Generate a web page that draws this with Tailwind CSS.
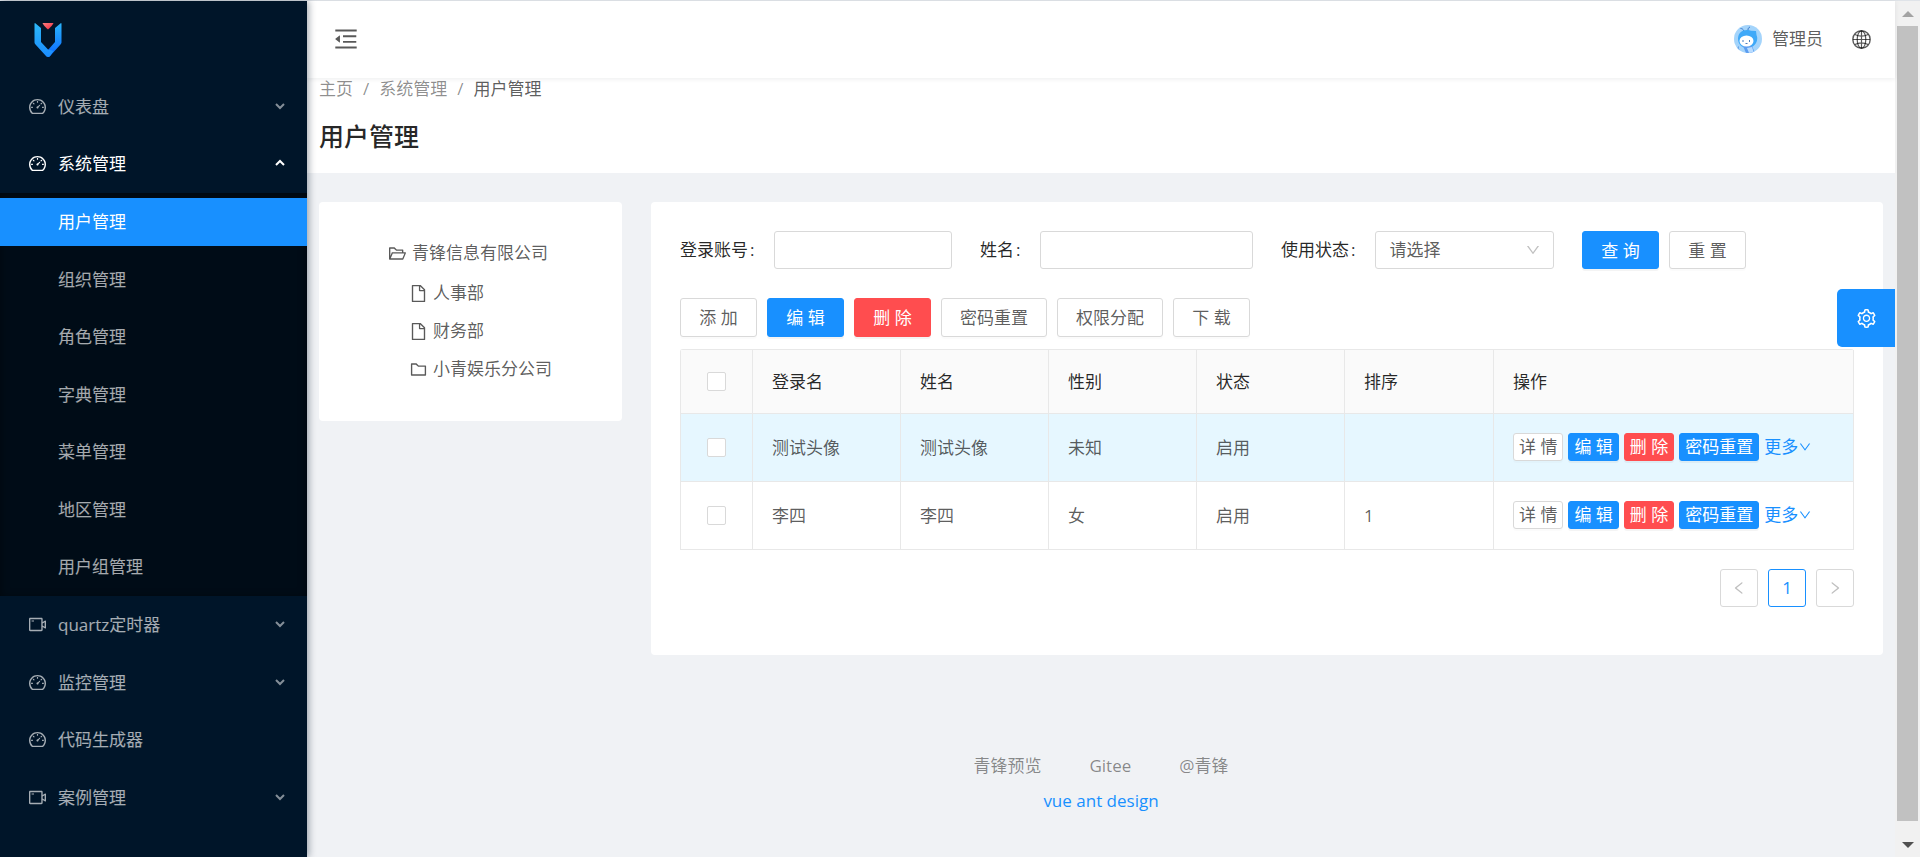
<!DOCTYPE html>
<html lang="zh-CN">
<head>
<meta charset="utf-8">
<title>用户管理</title>
<meta name="viewport" content="width=device-width, initial-scale=1">
<script src="https://cdn.jsdelivr.net/npm/@tailwindcss/browser@4"></script>
</head>
<body class="bg-[#f0f2f5] font-['Open_Sans','Noto_Sans_CJK_SC',sans-serif] text-[17px] leading-[25px] text-black/65">

<!-- Shared icon symbols -->
<svg class="hidden" aria-hidden="true">
  <symbol id="i-dashboard" viewBox="64 64 896 896"><path d="M924.8 385.6a446.7 446.7 0 0 0-96-142.4 446.7 446.7 0 0 0-142.4-96C631.1 123.8 572.5 112 512 112s-119.1 11.8-174.4 35.2a446.7 446.7 0 0 0-142.4 96 446.7 446.7 0 0 0-96 142.4C75.8 440.9 64 499.5 64 560c0 132.7 58.3 257.7 159.9 343.1l1.7 1.4c5.8 4.8 13.1 7.5 20.6 7.5h531.7c7.5 0 14.8-2.7 20.6-7.5l1.7-1.4C901.7 817.7 960 692.7 960 560c0-60.5-11.9-119.1-35.2-174.4zM761.4 836H262.6A371.12 371.12 0 0 1 140 560c0-99.4 38.7-192.8 109-263 70.3-70.3 163.7-109 263-109 99.4 0 192.8 38.7 263 109 70.3 70.3 109 163.7 109 263 0 105.6-44.5 205.5-122.6 276zM623.5 421.5a8.03 8.03 0 0 0-11.3 0L527.7 506c-18.7-5-39.4-.2-54.1 14.5a55.95 55.95 0 0 0 0 79.2 55.95 55.95 0 0 0 79.2 0 55.87 55.87 0 0 0 14.5-54.1l84.5-84.5c3.1-3.1 3.1-8.2 0-11.3l-28.3-28.3zM490 320h44c4.4 0 8-3.6 8-8v-80c0-4.4-3.6-8-8-8h-44c-4.4 0-8 3.6-8 8v80c0 4.4 3.6 8 8 8zm260 218v44c0 4.4 3.6 8 8 8h80c4.4 0 8-3.6 8-8v-44c0-4.4-3.6-8-8-8h-80c-4.4 0-8 3.6-8 8zm12.7-197.2l-31.1-31.1a8.03 8.03 0 0 0-11.3 0l-56.6 56.6a8.03 8.03 0 0 0 0 11.3l31.1 31.1c3.1 3.1 8.2 3.1 11.3 0l56.6-56.6c3.1-3.1 3.1-8.2 0-11.3zm-458.6-31.1a8.03 8.03 0 0 0-11.3 0l-31.1 31.1a8.03 8.03 0 0 0 0 11.3l56.6 56.6c3.1 3.1 8.2 3.1 11.3 0l31.1-31.1c3.1-3.1 3.1-8.2 0-11.3l-56.6-56.6zM262 530h-80c-4.4 0-8 3.6-8 8v44c0 4.4 3.6 8 8 8h80c4.4 0 8-3.6 8-8v-44c0-4.4-3.6-8-8-8z"/></symbol>
  <symbol id="i-video" viewBox="64 64 896 896"><path d="M912 302.3L784 376V224c0-35.3-28.7-64-64-64H128c-35.3 0-64 28.7-64 64v576c0 35.3 28.7 64 64 64h592c35.3 0 64-28.7 64-64V648l128 73.7c21.3 12.3 48-3.1 48-27.6V330c0-24.6-26.7-40-48-27.7zM712 792H136V232h576v560zm176-167l-104-59.8V458.9L888 399v226zM208 360h112c4.4 0 8-3.6 8-8v-48c0-4.4-3.6-8-8-8H208c-4.4 0-8 3.6-8 8v48c0 4.4 3.6 8 8 8z"/></symbol>
  <symbol id="i-folder-open" viewBox="64 64 896 896"><path d="M928 444H820V330.4c0-17.7-14.3-32-32-32H473L355.7 186.2a8.15 8.15 0 0 0-5.5-2.2H96c-17.7 0-32 14.3-32 32v592c0 17.7 14.3 32 32 32h698c13 0 24.8-7.9 29.7-20l134-332c1.5-3.8 2.3-7.9 2.3-12 0-17.7-14.3-32-32-32zM136 256h188.5l119.6 114.4H748V444H238c-13 0-24.8 7.9-29.7 20L136 643.2V256zm635.3 512H159l103.3-256h612.4L771.3 768z"/></symbol>
  <symbol id="i-folder" viewBox="64 64 896 896"><path d="M880 298.4H521L403.7 186.2a8.15 8.15 0 0 0-5.5-2.2H144c-17.7 0-32 14.3-32 32v592c0 17.7 14.3 32 32 32h736c17.7 0 32-14.3 32-32V330.4c0-17.7-14.3-32-32-32zM840 768H184V256h188.5l119.6 114.4H840V768z"/></symbol>
  <symbol id="i-file" viewBox="64 64 896 896"><path d="M854.6 288.6L639.4 73.4c-6-6-14.1-9.4-22.6-9.4H192c-17.7 0-32 14.3-32 32v832c0 17.7 14.3 32 32 32h640c17.7 0 32-14.3 32-32V311.3c0-8.5-3.4-16.7-9.4-22.7zM790.2 326H602V137.8L790.2 326zm1.8 562H232V136h302v216a42 42 0 0 0 42 42h216v494z"/></symbol>
  <symbol id="i-down" viewBox="64 64 896 896"><path d="M884 256h-75c-5.1 0-9.9 2.5-12.9 6.6L512 654.2 227.9 262.6c-3-4.1-7.8-6.6-12.9-6.6h-75c-6.5 0-10.3 7.4-6.5 12.7l352.6 486.1c12.8 17.6 39 17.6 51.7 0l352.6-486.1c3.9-5.3.1-12.7-6.4-12.7z"/></symbol>
  <symbol id="i-left" viewBox="64 64 896 896"><path d="M724 218.3V141c0-6.7-7.7-10.4-12.9-6.3L260.3 486.8a31.86 31.86 0 0 0 0 50.3l450.8 352.1c5.3 4.1 12.9.4 12.9-6.3v-77.3c0-4.9-2.3-9.6-6.1-12.6l-360-281 360-281.1c3.8-3 6.1-7.7 6.1-12.6z"/></symbol>
  <symbol id="i-right" viewBox="64 64 896 896"><path d="M765.7 486.8L314.9 134.7A7.97 7.97 0 0 0 302 141v77.3c0 4.9 2.3 9.6 6.1 12.6l360 281.1-360 281.1c-3.9 3-6.1 7.7-6.1 12.6V883c0 6.7 7.7 10.4 12.9 6.3l450.8-352.1a31.96 31.96 0 0 0 0-50.4z"/></symbol>
  <symbol id="i-fold" viewBox="64 64 896 896"><path d="M408 442h480c4.4 0 8-3.6 8-8v-56c0-4.4-3.6-8-8-8H408c-4.4 0-8 3.6-8 8v56c0 4.4 3.6 8 8 8zm-8 204c0 4.4 3.6 8 8 8h480c4.4 0 8-3.6 8-8v-56c0-4.4-3.6-8-8-8H408c-4.4 0-8 3.6-8 8v56zm504-486H120c-4.4 0-8 3.6-8 8v56c0 4.4 3.6 8 8 8h784c4.4 0 8-3.6 8-8v-56c0-4.4-3.6-8-8-8zm0 632H120c-4.4 0-8 3.6-8 8v56c0 4.4 3.6 8 8 8h784c4.4 0 8-3.6 8-8v-56c0-4.4-3.6-8-8-8zM115.4 518.9L271.7 642c5.8 4.6 14.4.5 14.4-6.9V388.9c0-7.4-8.5-11.5-14.4-6.9L115.4 505.1a8.74 8.74 0 0 0 0 13.8z"/></symbol>
  <symbol id="i-setting" viewBox="64 64 896 896"><path d="M924.8 625.7l-65.5-56c3.1-19 4.7-38.4 4.7-57.8s-1.6-38.8-4.7-57.8l65.5-56a32.03 32.03 0 0 0 9.3-35.2l-.9-2.6a443.74 443.74 0 0 0-79.7-137.9l-1.8-2.1a32.12 32.12 0 0 0-35.1-9.5l-81.3 28.9c-30-24.6-63.5-44-99.7-57.6l-15.7-85a32.05 32.05 0 0 0-25.8-25.7l-2.7-.5c-52.1-9.4-106.9-9.4-159 0l-2.7.5a32.05 32.05 0 0 0-25.8 25.7l-15.8 85.4a351.86 351.86 0 0 0-99 57.4l-81.9-29.1a32 32 0 0 0-35.1 9.5l-1.8 2.1a446.02 446.02 0 0 0-79.7 137.9l-.9 2.6c-4.5 12.5-.8 26.5 9.3 35.2l66.3 56.6c-3.1 18.8-4.6 38-4.6 57.1 0 19.2 1.5 38.4 4.6 57.1L99 625.5a32.03 32.03 0 0 0-9.3 35.2l.9 2.6c18.1 50.4 44.9 96.9 79.7 137.9l1.8 2.1a32.12 32.12 0 0 0 35.1 9.5l81.9-29.1c29.8 24.5 63.1 43.9 99 57.4l15.8 85.4a32.05 32.05 0 0 0 25.8 25.7l2.7.5a449.4 449.4 0 0 0 159 0l2.7-.5a32.05 32.05 0 0 0 25.8-25.7l15.7-85a350 350 0 0 0 99.7-57.6l81.3 28.9a32 32 0 0 0 35.1-9.5l1.8-2.1c34.8-41.1 61.6-87.5 79.7-137.9l.9-2.6c4.5-12.3.8-26.3-9.3-35zM788.3 465.9c2.5 15.1 3.8 30.6 3.8 46.1s-1.3 31-3.8 46.1l-6.6 40.1 74.7 63.9a370.03 370.03 0 0 1-42.6 73.6L721 702.8l-31.4 25.8c-23.9 19.6-50.5 35-79.3 45.8l-38.1 14.3-17.9 97a377.5 377.5 0 0 1-85 0l-17.9-97.2-37.8-14.5c-28.5-10.8-55-26.2-78.7-45.7l-31.4-25.9-93.4 33.2c-17-22.9-31.2-47.6-42.6-73.6l75.5-64.5-6.5-40c-2.4-14.9-3.7-30.3-3.7-45.5 0-15.3 1.2-30.6 3.7-45.5l6.5-40-75.5-64.5c11.3-26.1 25.6-50.7 42.6-73.6l93.4 33.2 31.4-25.9c23.7-19.5 50.2-34.9 78.7-45.7l37.9-14.3 17.9-97.2c28.1-3.2 56.8-3.2 85 0l17.9 97 38.1 14.3c28.7 10.8 55.4 26.2 79.3 45.8l31.4 25.8 92.8-32.9c17 22.9 31.2 47.6 42.6 73.6L781.8 426l6.5 39.9zM512 326c-97.2 0-176 78.8-176 176s78.8 176 176 176 176-78.8 176-176-78.8-176-176-176zm79.2 255.2A111.6 111.6 0 0 1 512 614c-29.9 0-58-11.7-79.2-32.8A111.6 111.6 0 0 1 400 502c0-29.9 11.7-58 32.8-79.2C454 401.6 482.1 390 512 390c29.9 0 58 11.6 79.2 32.8A111.6 111.6 0 0 1 624 502c0 29.9-11.7 58-32.8 79.2z"/></symbol>
  <symbol id="i-caret-down" viewBox="0 0 10 8"><path d="M1 2l4 4 4-4" fill="none" stroke="currentColor" stroke-width="2"/></symbol>
  <symbol id="i-caret-up" viewBox="0 0 10 8"><path d="M1 6l4-4 4 4" fill="none" stroke="currentColor" stroke-width="2"/></symbol>
</svg>

<div class="flex min-h-screen border-t border-[#dfe3e8]">

  <!-- Sidebar -->
  <aside class="z-20 w-[307px] shrink-0 bg-[#001529] text-white/65 shadow-[2px_0_7px_rgba(0,21,41,0.35)]">
    <a href="#" aria-label="首页" class="flex h-[77px] items-center pl-[34px]">
      <svg class="h-[34px] w-7" viewBox="0 0 28 34">
        <defs>
          <linearGradient id="lg-l" x1="0" y1="0" x2="0" y2="1"><stop offset="0" stop-color="#2cb8f8"/><stop offset="1" stop-color="#1a8cff"/></linearGradient>
          <linearGradient id="lg-r" x1="0" y1="0" x2="0" y2="1"><stop offset="0" stop-color="#29b4fb"/><stop offset="1" stop-color="#0c68ff"/></linearGradient>
          <linearGradient id="lg-t" x1="0" y1="0" x2="1" y2="1"><stop offset="0" stop-color="#fa8080"/><stop offset="1" stop-color="#f0263c"/></linearGradient>
        </defs>
        <path d="M27 0l-6 5v14l-7 8v7c1 0 2-1 2.500-1.500L26.500 21.500c.8-1 1-1.500 1-2.500V.8c0-.5-.3-.8-.5-.8z" fill="url(#lg-r)"/>
        <path d="M1 0l6 5v14l7 7.500 5.500 1.500-3 4.500c-1.500 2-3.500 2-5 0L1.500 21.500c-.8-1-1-1.500-1-2.500V.8C.5.300.800 0 1 0z" fill="url(#lg-l)"/>
        <path d="M8.500 0h11c-.3 1.200-3.500 5-5.500 6.500C12 5 8.800 1.200 8.500 0z" fill="url(#lg-t)"/>
      </svg>
    </a>
    <nav class="pt-[5px]">
      <a href="#" class="mb-[9px] flex h-12 items-center pr-[22px] pb-0.5 pl-[29px]"><svg class="mr-3 size-[17px] fill-current"><use href="#i-dashboard"/></svg><span class="flex-1">仪表盘</span><svg class="h-2 w-2.5 opacity-80"><use href="#i-caret-down"/></svg></a>
      <a href="#" class="mb-[5px] flex h-12 items-center pr-[22px] pb-0.5 pl-[29px] text-white"><svg class="mr-3 size-[17px] fill-current"><use href="#i-dashboard"/></svg><span class="flex-1">系统管理</span><svg class="h-2 w-2.5"><use href="#i-caret-up"/></svg></a>
      <ul class="mb-[5px] bg-[#000c17] py-[5px] shadow-[inset_0_2px_10px_rgba(0,0,0,0.45)]">
        <li class="mb-[10px] bg-[#1890ff] text-white"><a href="#" aria-current="page" class="flex h-12 items-center pb-0.5 pl-[58px]">用户管理</a></li>
        <li class="mb-[9px]"><a href="#" class="flex h-12 items-center pb-0.5 pl-[58px]">组织管理</a></li>
        <li class="mb-[10px]"><a href="#" class="flex h-12 items-center pb-0.5 pl-[58px]">角色管理</a></li>
        <li class="mb-[9px]"><a href="#" class="flex h-12 items-center pb-0.5 pl-[58px]">字典管理</a></li>
        <li class="mb-[10px]"><a href="#" class="flex h-12 items-center pb-0.5 pl-[58px]">菜单管理</a></li>
        <li class="mb-[9px]"><a href="#" class="flex h-12 items-center pb-0.5 pl-[58px]">地区管理</a></li>
        <li><a href="#" class="flex h-12 items-center pb-0.5 pl-[58px]">用户组管理</a></li>
      </ul>
      <a href="#" class="mb-[10px] flex h-12 items-center pr-[22px] pb-0.5 pl-[29px]"><svg class="mr-3 size-[17px] fill-current"><use href="#i-video"/></svg><span class="flex-1">quartz定时器</span><svg class="h-2 w-2.5 opacity-80"><use href="#i-caret-down"/></svg></a>
      <a href="#" class="mb-[9px] flex h-12 items-center pr-[22px] pb-0.5 pl-[29px]"><svg class="mr-3 size-[17px] fill-current"><use href="#i-dashboard"/></svg><span class="flex-1">监控管理</span><svg class="h-2 w-2.5 opacity-80"><use href="#i-caret-down"/></svg></a>
      <a href="#" class="mb-[10px] flex h-12 items-center pr-[22px] pb-0.5 pl-[29px]"><svg class="mr-3 size-[17px] fill-current"><use href="#i-dashboard"/></svg><span class="flex-1">代码生成器</span></a>
      <a href="#" class="flex h-12 items-center pr-[22px] pb-0.5 pl-[29px]"><svg class="mr-3 size-[17px] fill-current"><use href="#i-video"/></svg><span class="flex-1">案例管理</span><svg class="h-2 w-2.5 opacity-80"><use href="#i-caret-down"/></svg></a>
    </nav>
  </aside>

  <div class="relative flex min-w-0 flex-1 flex-col">
    <!-- Top bar -->
    <header class="z-10 flex h-[77px] shrink-0 items-center bg-white pr-6 pb-0.5 pl-[27px] shadow-[0_1px_5px_rgba(0,21,41,0.08)]">
      <button type="button" aria-label="收起菜单"><svg class="size-6 fill-current"><use href="#i-fold"/></svg></button>
      <a href="#" class="ml-auto flex items-center">
        <svg class="mr-[10px] size-7" viewBox="0 0 28 28">
          <defs><clipPath id="av"><circle cx="14" cy="14" r="14"/></clipPath></defs>
          <g clip-path="url(#av)">
            <rect width="28" height="28" fill="#a4d4fb"/>
            <path d="M10 6C9 4 8 3.500 6.500 3.500M14 5c0-1.500.5-2.500 2-3" fill="none" stroke="#3a78c8" stroke-width="1"/>
            <path d="M4 14C4 8 8 5 13 5c2 0 3 .3 4 .8L22 6l.500 4c.7 1.500 1 3 .5 5.500C22 20 18 23 13 23S4 19 4 14z" fill="#3fa9f8"/>
            <path d="M9 21l9 0 3 7H12z" fill="#5b9df0"/>
            <path d="M13 23l5-1 2 6h-5z" fill="#b9dcff"/>
            <ellipse cx="12.500" cy="16" rx="7" ry="5.500" fill="#fff"/>
            <path d="M9 15v2M15.500 15v2M11.500 18.500h2" stroke="#4a7fc0" stroke-width="1" fill="none"/>
            <path d="M5 21.500c-1.500 1-1.500 2.500.5 3.500" stroke="#4c8fe0" fill="none"/>
          </g>
        </svg>
        <span>管理员</span>
      </a>
      <button type="button" aria-label="语言" class="ml-[29px] pt-0.5">
        <svg class="size-[19px]" viewBox="0 0 19 19" fill="none" stroke="currentColor" stroke-width="1.200"><circle cx="9.500" cy="9.500" r="8.700" stroke-width="1.400"/><ellipse cx="9.500" cy="9.500" rx="4.300" ry="8.700"/><path d="M9.500 1v17M1 9.500h17M2.800 4.500c4 2 9.400 2 13.400 0M2.800 14.500c4-2 9.400-2 13.400 0"/></svg>
      </button>
    </header>

    <!-- Page heading -->
    <div class="bg-white px-3 pb-[18px]">
      <nav aria-label="面包屑" class="-mt-0.5 flex gap-[10px] text-black/45">
        <a href="#">主页</a><span>/</span><a href="#">系统管理</a><span>/</span><span class="text-black/65">用户管理</span>
      </nav>
      <h1 class="mt-4 text-[25px] leading-[38px] font-medium text-black/85">用户管理</h1>
    </div>

    <main class="flex items-start gap-[29px] px-3 pt-[29px]">
      <!-- Organisation tree -->
      <section class="w-[303px] shrink-0 rounded-sm bg-white pt-[38px] pr-4 pb-[33px] pl-[70px]">
        <ul class="leading-[38px]">
          <li><a href="#" class="flex items-center gap-[6px] leading-[26px]"><svg class="size-[17px] fill-current"><use href="#i-folder-open"/></svg>青锋信息有限公司</a>
            <ul class="mt-2 pl-[21px]">
              <li><a href="#" class="flex items-center gap-[6px]"><svg class="size-[17px] fill-current"><use href="#i-file"/></svg>人事部</a></li>
              <li><a href="#" class="flex items-center gap-[6px]"><svg class="size-[17px] fill-current"><use href="#i-file"/></svg>财务部</a></li>
              <li><a href="#" class="flex items-center gap-[6px]"><svg class="size-[17px] fill-current"><use href="#i-folder"/></svg>小青娱乐分公司</a></li>
            </ul>
          </li>
        </ul>
      </section>

      <!-- User list -->
      <section class="min-w-0 flex-1 rounded-sm bg-white px-[29px] pt-[29px] pb-12">
        <form class="flex flex-wrap gap-x-7 gap-y-4">
          <div class="flex w-[272px] items-center">
            <label for="account" class="mr-5 shrink-0 pb-0.5 text-black/85">登录账号<span class="ml-0.5">:</span></label>
            <input id="account" type="text" class="h-[38px] w-0 flex-1 rounded-[3px] border border-[#d9d9d9] px-3">
          </div>
          <div class="flex w-[273px] items-center">
            <label for="name" class="mr-5 shrink-0 pb-0.5 text-black/85">姓名<span class="ml-0.5">:</span></label>
            <input id="name" type="text" class="h-[38px] w-0 flex-1 rounded-[3px] border border-[#d9d9d9] px-3">
          </div>
          <div class="flex w-[273px] items-center">
            <label for="state" class="mr-5 shrink-0 pb-0.5 text-black/85">使用状态<span class="ml-0.5">:</span></label>
            <div class="relative flex-1">
              <select id="state" class="h-[38px] w-full appearance-none rounded-[3px] border border-[#d9d9d9] bg-white pr-8 pb-0.5 pl-[13px]"><option>请选择</option></select>
              <svg class="pointer-events-none absolute top-3 right-[14px] size-[14px] fill-black/25"><use href="#i-down"/></svg>
            </div>
          </div>
          <div class="flex gap-[10px]">
            <button type="button" class="h-[38px] min-w-[77px] rounded-[3px] border border-[#1890ff] bg-[#1890ff] px-[18px] text-white shadow-[0_2px_0_rgba(0,0,0,0.045)]">查 询</button>
            <button type="reset" class="h-[38px] min-w-[77px] rounded-[3px] border border-[#d9d9d9] bg-white px-[18px] shadow-[0_2px_0_rgba(0,0,0,0.015)]">重 置</button>
          </div>
        </form>

        <div class="mt-[29px] flex flex-wrap gap-[10px]">
          <button type="button" class="h-[39px] min-w-[77px] rounded-[3px] border border-[#d9d9d9] bg-white px-[18px] shadow-[0_2px_0_rgba(0,0,0,0.015)]">添 加</button>
          <button type="button" class="h-[39px] min-w-[77px] rounded-[3px] border border-[#1890ff] bg-[#1890ff] px-[18px] text-white shadow-[0_2px_0_rgba(0,0,0,0.045)]">编 辑</button>
          <button type="button" class="h-[39px] min-w-[77px] rounded-[3px] border border-[#ff4d4f] bg-[#ff4d4f] px-[18px] text-white shadow-[0_2px_0_rgba(0,0,0,0.045)]">删 除</button>
          <button type="button" class="h-[39px] min-w-[77px] rounded-[3px] border border-[#d9d9d9] bg-white px-[18px] shadow-[0_2px_0_rgba(0,0,0,0.015)]">密码重置</button>
          <button type="button" class="h-[39px] min-w-[77px] rounded-[3px] border border-[#d9d9d9] bg-white px-[18px] shadow-[0_2px_0_rgba(0,0,0,0.015)]">权限分配</button>
          <button type="button" class="h-[39px] min-w-[77px] rounded-[3px] border border-[#d9d9d9] bg-white px-[18px] shadow-[0_2px_0_rgba(0,0,0,0.015)]">下 载</button>
        </div>

        <table class="mt-3 w-full table-fixed border-separate border-spacing-0 rounded-t-[3px] border-t border-l border-[#e8e8e8] text-left [&_td]:border-r [&_td]:border-b [&_td]:border-[#e8e8e8] [&_td]:px-[19px] [&_th]:border-r [&_th]:border-b [&_th]:border-[#e8e8e8] [&_th]:px-[19px] [&_th]:font-normal">
          <colgroup><col class="w-[72px]"><col class="w-[148px]"><col class="w-[148px]"><col class="w-[148px]"><col class="w-[148px]"><col class="w-[149px]"><col></colgroup>
          <thead class="h-16 bg-[#fafafa] text-black/85">
            <tr>
              <th><input type="checkbox" aria-label="全选" class="mx-auto block size-[19px] appearance-none rounded-[2px] border border-[#d9d9d9] bg-white"></th>
              <th>登录名</th><th>姓名</th><th>性别</th><th>状态</th><th>排序</th><th>操作</th>
            </tr>
          </thead>
          <tbody>
            <tr class="h-[68px] bg-[#e6f7ff]">
              <td><input type="checkbox" aria-label="选择测试头像" class="mx-auto block size-[19px] appearance-none rounded-[2px] border border-[#d9d9d9] bg-white"></td>
              <td>测试头像</td><td>测试头像</td><td>未知</td><td>启用</td><td></td>
              <td>
                <div class="flex items-center gap-[5px] pb-0.5">
                  <button type="button" class="h-7 min-w-[50px] rounded-[3px] border border-[#d9d9d9] bg-white px-[5px] shadow-[0_2px_0_rgba(0,0,0,0.015)]">详 情</button>
                  <button type="button" class="h-7 min-w-[50px] rounded-[3px] border border-[#1890ff] bg-[#1890ff] px-[5px] text-white shadow-[0_2px_0_rgba(0,0,0,0.045)]">编 辑</button>
                  <button type="button" class="h-7 min-w-[50px] rounded-[3px] border border-[#ff4d4f] bg-[#ff4d4f] px-[5px] text-white shadow-[0_2px_0_rgba(0,0,0,0.045)]">删 除</button>
                  <button type="button" class="h-7 rounded-[3px] border border-[#1890ff] bg-[#1890ff] px-[5px] text-white shadow-[0_2px_0_rgba(0,0,0,0.045)]">密码重置</button>
                  <a href="#" class="flex items-center gap-px text-[#1890ff]">更多<svg class="size-3 fill-current"><use href="#i-down"/></svg></a>
                </div>
              </td>
            </tr>
            <tr class="h-[68px]">
              <td><input type="checkbox" aria-label="选择李四" class="mx-auto block size-[19px] appearance-none rounded-[2px] border border-[#d9d9d9] bg-white"></td>
              <td>李四</td><td>李四</td><td>女</td><td>启用</td><td>1</td>
              <td>
                <div class="flex items-center gap-[5px] pb-0.5">
                  <button type="button" class="h-7 min-w-[50px] rounded-[3px] border border-[#d9d9d9] bg-white px-[5px] shadow-[0_2px_0_rgba(0,0,0,0.015)]">详 情</button>
                  <button type="button" class="h-7 min-w-[50px] rounded-[3px] border border-[#1890ff] bg-[#1890ff] px-[5px] text-white shadow-[0_2px_0_rgba(0,0,0,0.045)]">编 辑</button>
                  <button type="button" class="h-7 min-w-[50px] rounded-[3px] border border-[#ff4d4f] bg-[#ff4d4f] px-[5px] text-white shadow-[0_2px_0_rgba(0,0,0,0.045)]">删 除</button>
                  <button type="button" class="h-7 rounded-[3px] border border-[#1890ff] bg-[#1890ff] px-[5px] text-white shadow-[0_2px_0_rgba(0,0,0,0.045)]">密码重置</button>
                  <a href="#" class="flex items-center gap-px text-[#1890ff]">更多<svg class="size-3 fill-current"><use href="#i-down"/></svg></a>
                </div>
              </td>
            </tr>
          </tbody>
        </table>

        <nav aria-label="分页" class="mt-[19px] flex justify-end gap-[10px]">
          <button type="button" aria-label="上一页" disabled class="flex size-[38px] items-center justify-center rounded-[3px] border border-[#d9d9d9] bg-white"><svg class="size-[14px] fill-black/25"><use href="#i-left"/></svg></button>
          <button type="button" aria-current="page" class="size-[38px] rounded-[3px] border border-[#1890ff] bg-white pb-0.5 text-[#1890ff]">1</button>
          <button type="button" aria-label="下一页" disabled class="flex size-[38px] items-center justify-center rounded-[3px] border border-[#d9d9d9] bg-white"><svg class="size-[14px] fill-black/25"><use href="#i-right"/></svg></button>
        </nav>
      </section>
    </main>

    <footer class="mt-[98px] text-center text-black/45">
      <div class="flex justify-center gap-12"><a href="#">青锋预览</a><a href="#">Gitee</a><a href="#">@青锋</a></div>
      <a href="#" class="mt-[10px] inline-block text-[#1890ff]">vue ant design</a>
    </footer>

    <!-- Floating settings handle -->
    <button type="button" aria-label="设置" class="absolute top-72 right-0 z-10 flex size-[58px] items-center justify-center rounded-l-[5px] bg-[#1890ff] text-white"><svg class="size-[19px] fill-current"><use href="#i-setting"/></svg></button>
  </div>

  <!-- Scroll track -->
  <div aria-hidden="true" class="sticky top-0 flex h-[calc(100vh-1px)] w-[25px] shrink-0 flex-col items-center bg-[#f1f1f1]">
    <div class="flex h-[25px] items-center"><svg class="h-1.5 w-3" viewBox="0 0 12 6"><path d="M0 6l6-6 6 6z" fill="#a3a3a3"/></svg></div>
    <div class="w-[21px] flex-1 bg-[#c1c1c1]"></div>
    <div class="flex h-9 items-end pb-[9px]"><svg class="h-1.5 w-3" viewBox="0 0 12 6"><path d="M0 0l6 6 6-6z" fill="#505050"/></svg></div>
  </div>
</div>
</body>
</html>
